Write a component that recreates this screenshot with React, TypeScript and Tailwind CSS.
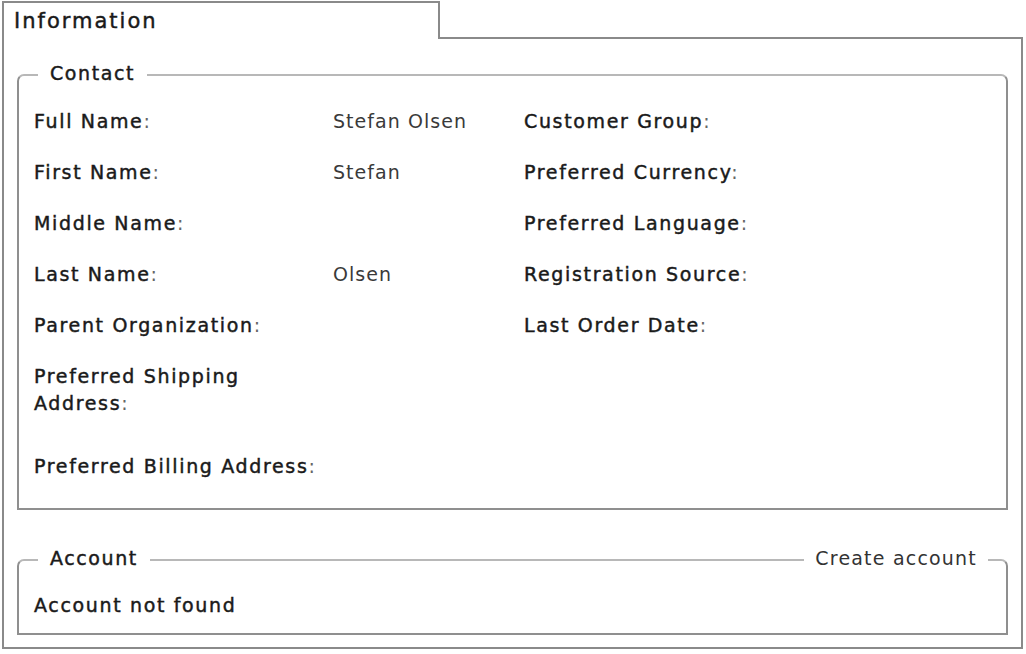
import React from "react";

const line = "border-[#8f8f8f]";

// colon drawn lighter, like the original label style
const Label: React.FC<{ text: string }> = ({ text }) => (
  <span className="text-[#1a1a1a] tracking-[1.65px] [-webkit-text-stroke:0.45px_#1a1a1a] after:text-[#666] after:content-[':'] after:[-webkit-text-stroke:0px]">
    {text}
  </span>
);

// fieldset-like header: rounded corners, text sitting on the top line
const GroupHeader: React.FC<{ title: string; action?: string }> = ({ title, action }) => (
  <div className="flex h-[24px] items-center">
    <div className="h-[13px] w-[21px] self-end rounded-tl-[7px] border-l-2 border-t-2 border-l-[#8f8f8f] border-t-[#b8b8b8]" />
    <span className="mb-[4px] px-[12px] leading-[20px] text-[#1a1a1a] tracking-[1.6px] [-webkit-text-stroke:0.45px_#1a1a1a]">
      {title}
    </span>
    <div className="h-0 flex-1 border-t-2 border-[#b8b8b8]" />
    {action && (
      <span className="mb-[4px] px-[11px] leading-[20px] text-[#333] tracking-[1.2px]">{action}</span>
    )}
    <div
      className={
        "h-[13px] self-end rounded-tr-[7px] border-r-2 border-t-2 border-r-[#8f8f8f] border-t-[#b8b8b8] " +
        (action ? "w-[20px]" : "w-[8px]")
      }
    />
  </div>
);

const rows: { label: string; value?: string; right?: string; cls: string }[] = [
  { label: "Full Name", value: "Stefan Olsen", right: "Customer Group", cls: "h-[51px]" },
  { label: "First Name", value: "Stefan", right: "Preferred Currency", cls: "h-[51px]" },
  { label: "Middle Name", right: "Preferred Language", cls: "h-[51px]" },
  { label: "Last Name", value: "Olsen", right: "Registration Source", cls: "h-[51px]" },
  { label: "Parent Organization", right: "Last Order Date", cls: "h-[51px]" },
  { label: "Preferred Shipping Address", cls: "h-[90px]" },
  { label: "Preferred Billing Address", cls: "h-[51px]" },
];

export default function App() {
  return (
    <div className="min-h-screen bg-white font-['DejaVu_Sans',sans-serif] text-[19px]">
      <div className="ml-[2px] w-[1021px] pt-[1px]">
        {/* tab strip */}
        <div className="flex h-[38px]">
          <div className="w-[438px] border-l-2 border-r-2 border-t-2 border-[#8a8a8a] pl-[10px] pt-[4px]">
            <span className="text-[21px] leading-[27px] text-[#1a1a1a] tracking-[2px] [-webkit-text-stroke:0.45px_#1a1a1a]">
              Information
            </span>
          </div>
          <div className="flex-1 border-b-2 border-[#8a8a8a]" />
        </div>

        {/* tab body */}
        <div className="h-[610px] border-b-2 border-l-2 border-r-2 border-[#8a8a8a] px-[13px] pt-[24px]">
          <GroupHeader title="Contact" />
          <div className={"border-b-2 border-l-2 border-r-2 pl-[15px] pt-[9px] pb-[16px] " + line}>
            {rows.map((r) => (
              <div key={r.label} className={"grid grid-cols-[299px_191px_1fr] pt-[12px] leading-[27px] " + r.cls}>
                <div className="pr-[8px]">
                  <Label text={r.label} />
                </div>
                <div className="text-[#3a3a3a] tracking-[1.05px]">{r.value}</div>
                <div>{r.right && <Label text={r.right} />}</div>
              </div>
            ))}
          </div>

          <div className="mt-[38px]">
            <GroupHeader title="Account" action="Create account" />
            <div className={"border-b-2 border-l-2 border-r-2 pl-[15px] pt-[20px] pb-[14px] leading-[27px] " + line}>
              <span className="text-[#1a1a1a] tracking-[1.65px] [-webkit-text-stroke:0.45px_#1a1a1a]">
                Account not found
              </span>
            </div>
          </div>
        </div>
      </div>
    </div>
  );
}
